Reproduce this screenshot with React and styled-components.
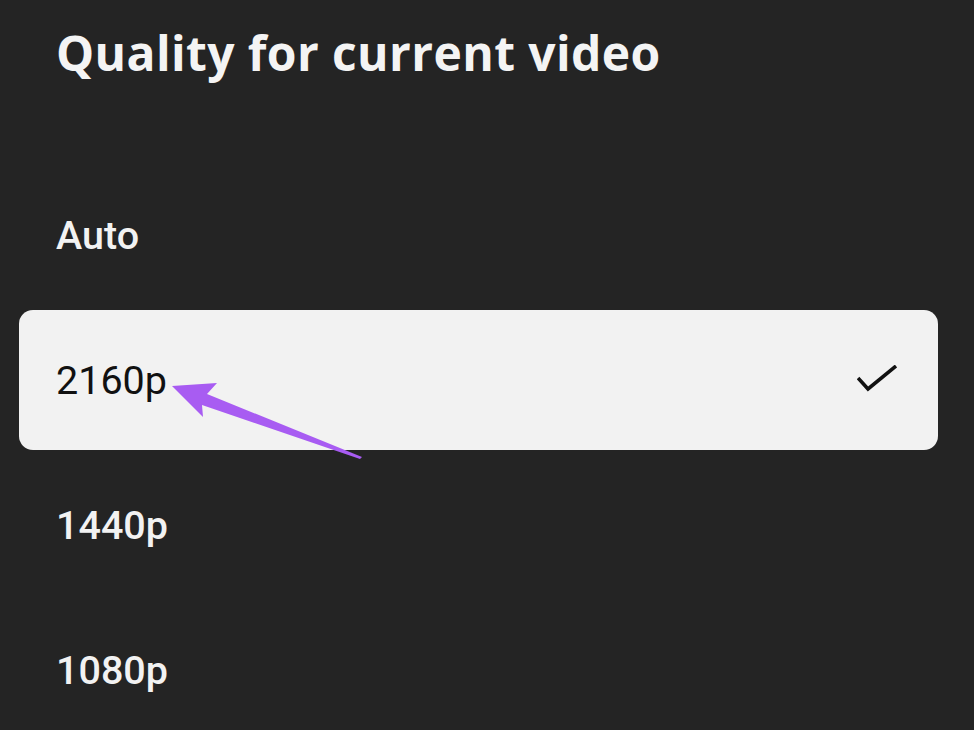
import React from "react";
import styled, { createGlobalStyle } from "styled-components";

const Global = createGlobalStyle`
  html, body { margin: 0; padding: 0; background: #242424; }
  body { width: 974px; height: 730px; overflow: hidden; }
`;

const Page = styled.div`
  position: relative;
  width: 974px;
  height: 730px;
  background: #242424;
  overflow: hidden;
`;

const Title = styled.h1`
  margin: 0;
  height: 104px;
  padding-left: 56px;
  display: flex;
  align-items: center;
  font-family: "Open Sans", "Noto Sans", sans-serif;
  font-weight: 700;
  font-size: 48px;
  color: #f4f4f4;
  letter-spacing: 0.4px;
`;

const List = styled.div`
  display: flex;
  flex-direction: column;
  margin: 59px 36px 0 19px;
`;

const Row = styled.div`
  height: 145px;
  display: flex;
  align-items: center;
  justify-content: space-between;
  padding: 0 41px 0 37px;
  box-sizing: border-box;
  font-family: Roboto, "Liberation Sans", sans-serif;
  font-size: 39.5px;
  font-weight: ${(p) => (p.$selected ? 400 : 500)};
  color: ${(p) => (p.$selected ? "#111" : "#f2f2f2")};
  background: ${(p) => (p.$selected ? "#f2f2f2" : "transparent")};
  border-radius: 14px;
  ${(p) => (p.$selected ? "height: 140px; margin: 2px 0 3px;" : "")}
`;

const Check = () => (
  <svg width="40" height="30" viewBox="0 0 40 30">
    <path d="M1 13 L11 24 L39 1" fill="none" stroke="#111" strokeWidth="3.6" strokeLinejoin="miter" />
  </svg>
);

const ArrowLayer = styled.svg`
  position: absolute;
  left: 0;
  top: 0;
  pointer-events: none;
`;

const items = ["Auto", "2160p", "1440p", "1080p"];

export default function App() {
  return (
    <Page>
      <Global />
      <Title>Quality for current video</Title>
      <List>
        {items.map((it) => (
          <Row key={it} $selected={it === "2160p"}>
            <span>{it}</span>
            {it === "2160p" && <Check />}
          </Row>
        ))}
      </List>
      <ArrowLayer width="974" height="730" viewBox="0 0 974 730">
        <polygon
          points="172,386 217,383 207,394 362,457 360,459 202,405 203,417"
          fill="#a85cf2"
        />
      </ArrowLayer>
    </Page>
  );
}
